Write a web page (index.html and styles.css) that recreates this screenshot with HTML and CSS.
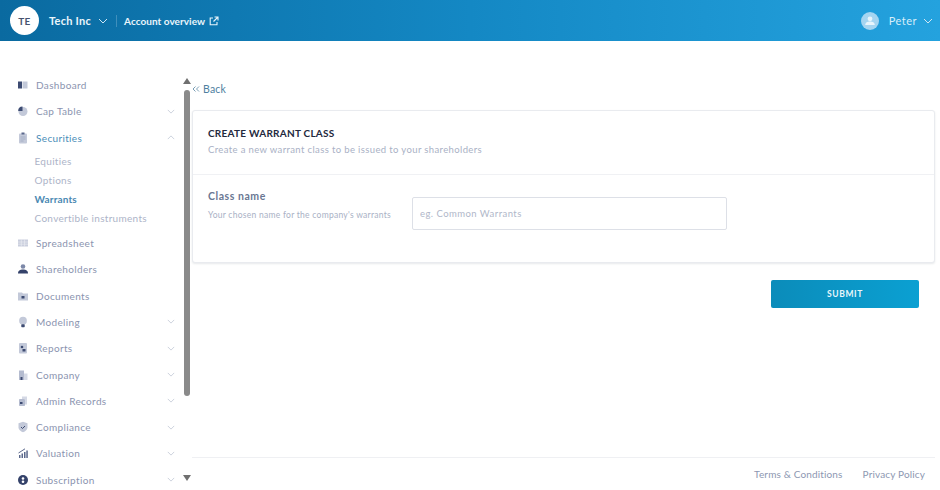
FILE: index.html
```html
<!DOCTYPE html>
<html lang="en">
<head>
<meta charset="utf-8">
<title>Create warrant class</title>
<link rel="stylesheet" href="styles.css">
</head>
<body>
<header class="topbar">
  <div class="avatar">TE</div>
  <span class="company">Tech Inc</span>
  <svg class="chev chev-light" viewBox="0 0 10 6"><path d="M1 1l4 4 4-4"/></svg>
  <span class="divider"></span>
  <a class="overview">Account overview</a>
  <svg class="ext" viewBox="0 0 10 10"><path d="M4 2H1.200v6.800H8V6M5.500 1H9v3.500M9 1L4.500 5.500"/></svg>
  <div class="user">
    <svg class="user-pic" viewBox="0 0 18 18"><circle cx="9" cy="9" r="9" fill="#a5d5f1"/><circle cx="9" cy="6.800" r="2.400" fill="#e8f5fc"/><path d="M4.200 13c0-2.600 2-3.600 4.800-3.600s4.800 1 4.800 3.600z" fill="#e8f5fc"/></svg>
    <span class="user-name">Peter</span>
    <svg class="chev chev-light" viewBox="0 0 10 6"><path d="M1 1l4 4 4-4"/></svg>
  </div>
</header>
<div class="layout">
  <aside class="sidebar">
    <nav class="nav">
      <a class="item"><svg class="ico" viewBox="0 0 12 12"><rect x="1" y="2.500" width="4" height="7" fill="#3d4b72"/><rect x="5.500" y="2.500" width="5" height="7" fill="#c3c9d9"/></svg><span>Dashboard</span></a>
      <a class="item"><svg class="ico" viewBox="0 0 12 12"><circle cx="6" cy="6.500" r="4.500" fill="#c3c9d9"/><path d="M5.500 1.500v4.500H1.200a4.500 4.500 0 0 1 4.300-4.500z" fill="#3d4b72"/></svg><span>Cap Table</span><svg class="chev" viewBox="0 0 10 6"><path d="M1 1l4 4 4-4"/></svg></a>
      <a class="item active"><svg class="ico" viewBox="0 0 12 12"><rect x="2" y="1.500" width="8" height="10" rx="1" fill="#c3c9d9"/><rect x="4.500" y=".5" width="3" height="2" fill="#5b688c"/><path d="M3.500 5h5M3.500 7h5M3.500 9h3" stroke="#9aa4bd" stroke-width=".7"/></svg><span>Securities</span><svg class="chev" viewBox="0 0 10 6"><path d="M1 5l4-4 4 4"/></svg></a>
      <div class="submenu">
        <a class="sub">Equities</a>
        <a class="sub">Options</a>
        <a class="sub current">Warrants</a>
        <a class="sub">Convertible instruments</a>
      </div>
      <a class="item"><svg class="ico" viewBox="0 0 12 12"><rect x="1" y="2.500" width="10" height="7" fill="#c9cedd"/><path d="M1 5h10M1 7.200h10M4.300 2.500v7M7.600 2.500v7" stroke="#eef0f5" stroke-width=".6"/></svg><span>Spreadsheet</span></a>
      <a class="item"><svg class="ico" viewBox="0 0 12 12"><circle cx="6" cy="3.500" r="2.300" fill="#7c88a8"/><path d="M1 10.500c0-3 2-4 5-4s5 1 5 4z" fill="#34426a"/></svg><span>Shareholders</span></a>
      <a class="item"><svg class="ico" viewBox="0 0 12 12"><path d="M1 2.500h4l1 1h5v7H1z" fill="#c3c9d9"/><rect x="4.500" y="6" width="3" height="2.500" fill="#3d4b72"/></svg><span>Documents</span></a>
      <a class="item"><svg class="ico" viewBox="0 0 12 14"><circle cx="6" cy="5.500" r="4.500" fill="#c3c9d9"/><rect x="4" y="9.500" width="4" height="3.500" rx=".8" fill="#3d4b72"/></svg><span>Modeling</span><svg class="chev" viewBox="0 0 10 6"><path d="M1 1l4 4 4-4"/></svg></a>
      <a class="item"><svg class="ico" viewBox="0 0 12 12"><rect x="2" y="1" width="8" height="10.500" rx="1" fill="#c3c9d9"/><circle cx="5" cy="5" r="1.300" fill="#3d4b72"/><rect x="5.500" y="7" width="3" height="2.500" fill="#3d4b72"/></svg><span>Reports</span><svg class="chev" viewBox="0 0 10 6"><path d="M1 1l4 4 4-4"/></svg></a>
      <a class="item"><svg class="ico" viewBox="0 0 12 12"><rect x="2" y="1.500" width="5" height="9.500" fill="#b4bbcf"/><rect x="7" y="4.500" width="3.500" height="6.500" fill="#d5d9e5"/><rect x="3.500" y="8" width="2" height="3" fill="#3d4b72"/></svg><span>Company</span><svg class="chev" viewBox="0 0 10 6"><path d="M1 1l4 4 4-4"/></svg></a>
      <a class="item"><svg class="ico" viewBox="0 0 12 12"><path d="M5 1.500h5v8H8V4H5z" fill="#d5d9e5"/><rect x="2" y="4" width="6" height="7" rx=".8" fill="#b4bbcf"/><rect x="3" y="7" width="2.500" height="2" fill="#3d4b72"/></svg><span>Admin Records</span><svg class="chev" viewBox="0 0 10 6"><path d="M1 1l4 4 4-4"/></svg></a>
      <a class="item"><svg class="ico" viewBox="0 0 12 12"><path d="M6 .8l4.500 1.500v4c0 2.500-2 4-4.500 5-2.500-1-4.500-2.500-4.500-5v-4z" fill="#c3c9d9"/><path d="M4 6l1.500 1.500L8 5" fill="none" stroke="#3d4b72" stroke-width="1"/></svg><span>Compliance</span><svg class="chev" viewBox="0 0 10 6"><path d="M1 1l4 4 4-4"/></svg></a>
      <a class="item"><svg class="ico" viewBox="0 0 12 12"><path d="M1.500 6L8 1.800" fill="none" stroke="#5b688c" stroke-width="1"/><rect x="2" y="8" width="1.500" height="3" fill="#5b688c"/><rect x="4.500" y="6.500" width="1.500" height="4.500" fill="#5b688c"/><rect x="7" y="5" width="1.500" height="6" fill="#5b688c"/><rect x="9.300" y="3.500" width="1.500" height="7.500" fill="#5b688c"/></svg><span>Valuation</span><svg class="chev" viewBox="0 0 10 6"><path d="M1 1l4 4 4-4"/></svg></a>
      <a class="item"><svg class="ico" viewBox="0 0 12 12"><circle cx="6" cy="6" r="5" fill="#34426a"/><circle cx="6" cy="4.500" r="1.300" fill="#fff"/><circle cx="6" cy="7.800" r="1.300" fill="#fff"/></svg><span>Subscription</span><svg class="chev" viewBox="0 0 10 6"><path d="M1 1l4 4 4-4"/></svg></a>
    </nav>
    <div class="scrollbar">
      <span class="arrow-up"></span>
      <span class="thumb"></span>
      <span class="arrow-down"></span>
    </div>
  </aside>
  <main class="main">
    <a class="back"><svg class="back-mark" viewBox="0 0 8 8"><path d="M3.500 1.500L1 4l2.500 2.500M7 1.500L4.500 4 7 6.500"/></svg>Back</a>
    <section class="card">
      <div class="card-head">
        <h1 class="card-title">CREATE WARRANT CLASS</h1>
        <p class="card-sub">Create a new warrant class to be issued to your shareholders</p>
      </div>
      <div class="card-body">
        <div class="field-label">
          <div class="label">Class name</div>
          <div class="hint">Your chosen name for the company's warrants</div>
        </div>
        <input class="input" type="text" placeholder="eg. Common Warrants">
      </div>
    </section>
    <div class="actions"><button class="submit" type="button">SUBMIT</button></div>
    <footer class="footer">
      <a class="foot-link">Terms &amp; Conditions</a>
      <a class="foot-link">Privacy Policy</a>
    </footer>
  </main>
</div>
</body>
</html>
```
FILE: styles.css
```css
* { box-sizing: border-box; }
html, body { margin: 0; height: 490px; overflow: hidden; background: #fff; }
body { font-family: "Lato", "Noto Sans", sans-serif; color: #7a86a3; }

.topbar {
  height: 41px;
  display: flex;
  align-items: center;
  padding: 0 7px 0 10px;
  background: linear-gradient(90deg, #0a6aa0 0%, #1488c4 50%, #24a2de 100%);
  color: #eaf5fb;
}
.avatar {
  width: 29px; height: 29px; border-radius: 50%;
  background: #fff; color: #46536f;
  font-size: 10px; font-weight: 700; letter-spacing: .4px;
  display: flex; align-items: center; justify-content: center;
  margin-right: 10px;
}
.company { font-size: 11px; font-weight: 700; letter-spacing: .25px; margin-right: 7px; }
.chev { width: 8px; height: 5px; fill: none; stroke: #c0c8d6; stroke-width: 1; flex: none; }
.chev-light { width: 10px; height: 6px; stroke: #cfe6f4; }
.divider { width: 1px; height: 12px; background: #3f8fbc; margin: 0 7px 0 8px; }
.overview { font-size: 10px; font-weight: 700; letter-spacing: .05px; margin-right: 4px; }
.ext { width: 10px; height: 10px; fill: none; stroke: #eaf5fb; stroke-width: 1.100; }
.user { margin-left: auto; display: flex; align-items: center; }
.user-pic { width: 18px; height: 18px; margin-right: 10px; }
.user-name { font-size: 11px; letter-spacing: .5px; margin-right: 6px; color: #d8eef9; }

.layout { display: flex; height: 449px; }

.sidebar { width: 192px; flex: none; display: flex; overflow: hidden; }
.nav { width: 183px; flex: none; padding: 31px 0 0 17px; }
.item {
  height: 26.300px;
  display: flex; align-items: center;
  font-size: 10px; letter-spacing: .35px; color: #8b94af;
  padding-right: 8px;
}
.item .ico { width: 12px; height: 12px; margin-right: 7px; flex: none; }
.item .chev { margin-left: auto; }
.item.active { color: #4a8db8; }
.submenu { padding: 1px 0 2px 17.500px; }
.sub {
  display: flex; align-items: center; height: 19px;
  font-size: 10px; letter-spacing: .3px; color: #adb4c8;
}
.sub.current { color: #4a88b2; font-weight: 700; letter-spacing: .15px; }

.scrollbar {
  width: 7px; flex: none;
  display: flex; flex-direction: column; align-items: center;
  padding-top: 37px;
}
.arrow-up { width: 0; height: 0; border: 4px solid transparent; border-top: 0; border-bottom: 6px solid #707070; margin-bottom: 6px; }
.thumb { width: 6px; height: 306px; background: #8a8a8a; border-radius: 3px; margin-bottom: 79px; flex: none; }
.arrow-down { width: 0; height: 0; border: 4px solid transparent; border-bottom: 0; border-top: 6px solid #707070; }

.main { flex: 1; display: flex; flex-direction: column; padding: 41px 5px 0 0; min-width: 0; }
.back { height: 14px; display: flex; align-items: center; font-size: 10.500px; letter-spacing: .2px; color: #4f7f9f; margin-bottom: 14px; }
.back-mark { width: 8px; height: 8px; margin-right: 3px; fill: none; stroke: #6b93ad; stroke-width: .9; }

.card { height: 153px; border: 1px solid #e9ebef; border-radius: 3px; box-shadow: 0 1px 2px rgba(60,70,90,.12); background: #fff; }
.card-head { height: 64px; padding: 15px 15px 0; border-bottom: 1px solid #f0f1f4; }
.card-title { margin: 0 0 2px; font-size: 10px; font-weight: 700; letter-spacing: .25px; line-height: 14px; color: #23293d; }
.card-sub { margin: 0; font-size: 9.500px; letter-spacing: .37px; line-height: 16px; color: #a9b1c5; }
.card-body { display: flex; padding: 22px 0 0 15px; }
.field-label { width: 204px; flex: none; margin-top: -8px; }
.label { font-size: 10.500px; font-weight: 700; letter-spacing: .55px; line-height: 14px; color: #6a7793; margin-bottom: 7px; }
.hint { font-size: 8.500px; letter-spacing: .27px; line-height: 10px; color: #a9b1c5; }
.input {
  width: 315px; height: 33px; border: 1px solid #dde0e7; border-radius: 2px;
  padding: 0 7px; font: 400 9.500px "Lato", sans-serif; letter-spacing: .45px; outline: 0; color: #6a7793;
}
.input::placeholder { color: #b0b7c9; opacity: 1; }

.actions { display: flex; justify-content: flex-end; padding: 17px 16px 0 0; }
.submit {
  width: 148px; height: 28px; border: 0; border-radius: 2px;
  background: linear-gradient(90deg, #0b8cba, #0ba0d2);
  color: #e8f6fb; font: 700 8.500px "Lato", sans-serif; letter-spacing: .6px;
}

.footer {
  margin-top: auto; height: 33px; border-top: 1px solid #eff0f3;
  display: flex; justify-content: flex-end; gap: 20px; padding: 9px 10px 0 0;
}
.foot-link { font-size: 10px; letter-spacing: .15px; line-height: 14px; color: #8d97b1; }
```
